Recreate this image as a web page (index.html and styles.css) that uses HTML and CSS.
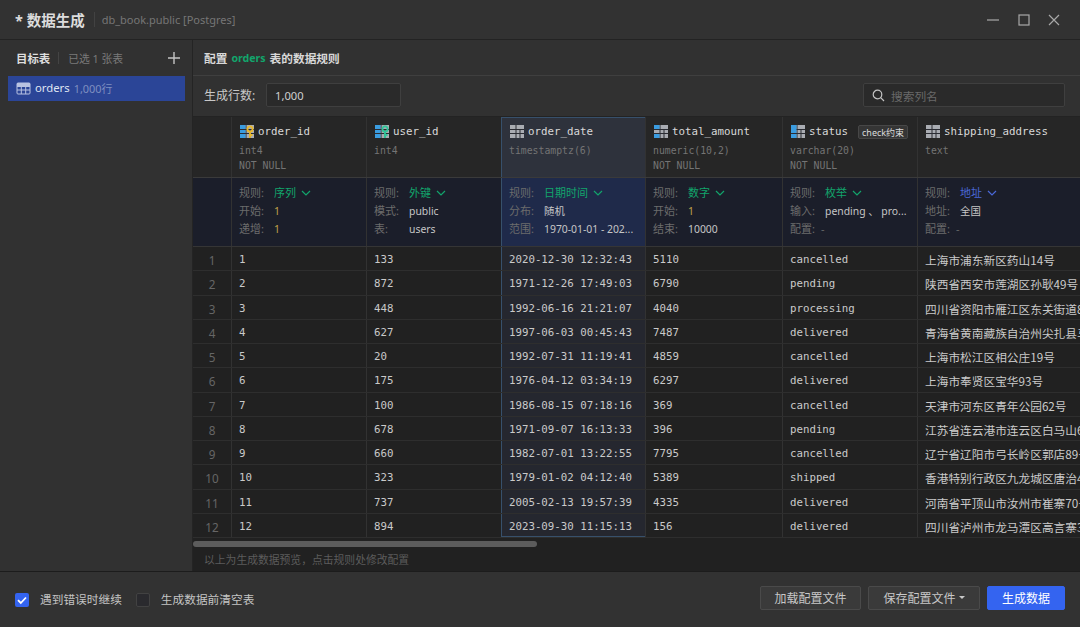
FILE: index.html
```html
<!DOCTYPE html>
<html lang="zh-CN">
<head>
<meta charset="utf-8">
<title>数据生成</title>
<link rel="stylesheet" href="styles.css">
</head>
<body>
<svg class="defs" width="0" height="0" aria-hidden="true">
  <symbol id="col-base" viewBox="0 0 14 13">
    <rect x="0" y="0" width="14" height="13" fill="#a9acb2"/>
    <path d="M6 0v13M6 4.5h8M6 8.5h8M10 4.5v8.5M0 4.5h6M0 8.5h6" stroke="#2a2c33" stroke-width="1" fill="none"/>
  </symbol>
</svg>
<div class="app">
  <header class="titlebar">
    <h1 class="title">* 数据生成</h1>
    <span class="title-sep"></span>
    <span class="conn">db_book.public [Postgres]</span>
    <div class="win-controls">
      <svg width="14" height="12" viewBox="0 0 14 12"><path d="M1 6h12" stroke="#a8a8a8" stroke-width="1.2"/></svg>
      <svg width="12" height="12" viewBox="0 0 12 12"><rect x="1" y="1" width="10" height="10" fill="none" stroke="#a8a8a8" stroke-width="1.2"/></svg>
      <svg width="12" height="12" viewBox="0 0 12 12"><path d="M1 1l10 10M11 1L1 11" stroke="#a8a8a8" stroke-width="1.2"/></svg>
    </div>
  </header>
  <div class="main">
    <aside class="sidebar">
      <div class="side-head">
        <strong class="side-title">目标表</strong>
        <span class="side-sep"></span>
        <span class="side-count">已选 1 张表</span>
        <svg class="side-add" width="14" height="14" viewBox="0 0 14 14"><path d="M7 1v12M1 7h12" stroke="#c4c4c4" stroke-width="1.4"/></svg>
      </div>
      <div class="side-item">
        <svg class="tbl-icon" width="15" height="13" viewBox="0 0 15 13"><rect x="1" y="1" width="13" height="11" rx="1" fill="none" stroke="#b9c3e2"/><path d="M1 4.5h13M1 8h13M5.3 4.5V12M9.7 4.5V12" stroke="#b9c3e2"/><rect x="1" y="1" width="13" height="3.5" fill="#b9c3e2"/></svg>
        <span class="side-name">orders</span>
        <span class="side-rows">1,000行</span>
      </div>
    </aside>
    <section class="content">
      <div class="config-head"><span>配置</span><span class="green">orders</span><span>表的数据规则</span></div>
      <div class="toolbar">
        <label class="rows-label">生成行数:</label>
        <div class="field rows-input">1,000</div>
        <div class="field search">
          <svg width="13" height="13" viewBox="0 0 13 13"><circle cx="5.5" cy="5.5" r="4.3" fill="none" stroke="#c4c4c4" stroke-width="1.2"/><path d="M8.7 8.7l3.3 3.3" stroke="#c4c4c4" stroke-width="1.2"/></svg>
          <span>搜索列名</span>
        </div>
      </div>
      <div class="grid">
        <div class="row head-row">
          <div class="cell corner"></div>
          <div class="cell">
            <div class="col-name"><svg class="col-icon" width="14" height="13"><use href="#col-base"/><rect width="5.5" height="4" fill="#3a9ce0"/><rect y="5" width="5.5" height="3" fill="#3a9ce0"/><rect y="9" width="5.5" height="4" fill="#3a9ce0"/><circle cx="10" cy="4" r="2.6" fill="none" stroke="#eab92a" stroke-width="1.8"/><path d="M10 6.5V13M10 10h2.5" stroke="#eab92a" stroke-width="1.8"/></svg>order_id</div>
            <div class="col-type">int4</div>
            <div class="col-type">NOT NULL</div>
          </div>
          <div class="cell">
            <div class="col-name"><svg class="col-icon" width="14" height="13"><use href="#col-base"/><rect width="5.5" height="4" fill="#3a9ce0"/><rect y="5" width="5.5" height="3" fill="#3a9ce0"/><rect y="9" width="5.5" height="4" fill="#3a9ce0"/><circle cx="10" cy="4" r="2.6" fill="none" stroke="#2fc79a" stroke-width="1.8"/><path d="M10 6.5V13M10 10h2.5" stroke="#2fc79a" stroke-width="1.8"/></svg>user_id</div>
            <div class="col-type">int4</div>
          </div>
          <div class="cell hl">
            <div class="col-name"><svg class="col-icon" width="14" height="13"><use href="#col-base"/></svg>order_date</div>
            <div class="col-type">timestamptz(6)</div>
          </div>
          <div class="cell">
            <div class="col-name"><svg class="col-icon" width="14" height="13"><use href="#col-base"/><rect width="5.5" height="4" fill="#3a9ce0"/><rect y="9" width="5.5" height="4" fill="#3a9ce0"/></svg>total_amount</div>
            <div class="col-type">numeric(10,2)</div>
            <div class="col-type">NOT NULL</div>
          </div>
          <div class="cell">
            <div class="col-name"><svg class="col-icon" width="14" height="13"><use href="#col-base"/><rect width="5.5" height="8" fill="#3a9ce0"/><rect y="9" width="5.5" height="4" fill="#3a9ce0"/></svg>status<span class="check-tag">check约束</span></div>
            <div class="col-type">varchar(20)</div>
            <div class="col-type">NOT NULL</div>
          </div>
          <div class="cell">
            <div class="col-name"><svg class="col-icon" width="14" height="13"><use href="#col-base"/></svg>shipping_address</div>
            <div class="col-type">text</div>
          </div>
        </div>
        <div class="row rule-row">
          <div class="cell corner"></div>
          <div class="cell">
            <div class="rule"><span class="k">规则:</span><span class="green">序列</span><svg class="chev" width="10" height="6" viewBox="0 0 10 6"><path d="M1 1l4 4 4-4" fill="none" stroke="#12a56c" stroke-width="1.2"/></svg></div>
            <div class="rule"><span class="k">开始:</span><span class="num">1</span></div>
            <div class="rule"><span class="k">递增:</span><span class="num">1</span></div>
          </div>
          <div class="cell">
            <div class="rule"><span class="k">规则:</span><span class="green">外键</span><svg class="chev" width="10" height="6" viewBox="0 0 10 6"><path d="M1 1l4 4 4-4" fill="none" stroke="#12a56c" stroke-width="1.2"/></svg></div>
            <div class="rule"><span class="k">模式:</span><span class="val">public</span></div>
            <div class="rule"><span class="k">表:</span><span class="val">users</span></div>
          </div>
          <div class="cell hl">
            <div class="rule"><span class="k">规则:</span><span class="green">日期时间</span><svg class="chev" width="10" height="6" viewBox="0 0 10 6"><path d="M1 1l4 4 4-4" fill="none" stroke="#12a56c" stroke-width="1.2"/></svg></div>
            <div class="rule"><span class="k">分布:</span><span class="val">随机</span></div>
            <div class="rule"><span class="k">范围:</span><span class="val">1970-01-01 - 202...</span></div>
          </div>
          <div class="cell">
            <div class="rule"><span class="k">规则:</span><span class="green">数字</span><svg class="chev" width="10" height="6" viewBox="0 0 10 6"><path d="M1 1l4 4 4-4" fill="none" stroke="#12a56c" stroke-width="1.2"/></svg></div>
            <div class="rule"><span class="k">开始:</span><span class="num">1</span></div>
            <div class="rule"><span class="k">结束:</span><span class="val">10000</span></div>
          </div>
          <div class="cell">
            <div class="rule"><span class="k">规则:</span><span class="green">枚举</span><svg class="chev" width="10" height="6" viewBox="0 0 10 6"><path d="M1 1l4 4 4-4" fill="none" stroke="#12a56c" stroke-width="1.2"/></svg></div>
            <div class="rule"><span class="k">输入:</span><span class="val">pending 、 pro...</span></div>
            <div class="rule"><span class="k">配置:</span><span class="dash">-</span></div>
          </div>
          <div class="cell">
            <div class="rule"><span class="k">规则:</span><span class="blue">地址</span><svg class="chev" width="10" height="6" viewBox="0 0 10 6"><path d="M1 1l4 4 4-4" fill="none" stroke="#4a68d8" stroke-width="1.2"/></svg></div>
            <div class="rule"><span class="k">地址:</span><span class="val">全国</span></div>
            <div class="rule"><span class="k">配置:</span><span class="dash">-</span></div>
          </div>
        </div>
        <div class="row data"><div class="cell idx">1</div><div class="cell">1</div><div class="cell">133</div><div class="cell hl">2020-12-30 12:32:43</div><div class="cell">5110</div><div class="cell">cancelled</div><div class="cell addr">上海市浦东新区药山14号</div></div>
        <div class="row data"><div class="cell idx">2</div><div class="cell">2</div><div class="cell">872</div><div class="cell hl">1971-12-26 17:49:03</div><div class="cell">6790</div><div class="cell">pending</div><div class="cell addr">陕西省西安市莲湖区孙耿49号</div></div>
        <div class="row data"><div class="cell idx">3</div><div class="cell">3</div><div class="cell">448</div><div class="cell hl">1992-06-16 21:21:07</div><div class="cell">4040</div><div class="cell">processing</div><div class="cell addr">四川省资阳市雁江区东关街道8号</div></div>
        <div class="row data"><div class="cell idx">4</div><div class="cell">4</div><div class="cell">627</div><div class="cell hl">1997-06-03 00:45:43</div><div class="cell">7487</div><div class="cell">delivered</div><div class="cell addr">青海省黄南藏族自治州尖扎县马</div></div>
        <div class="row data"><div class="cell idx">5</div><div class="cell">5</div><div class="cell">20</div><div class="cell hl">1992-07-31 11:19:41</div><div class="cell">4859</div><div class="cell">cancelled</div><div class="cell addr">上海市松江区相公庄19号</div></div>
        <div class="row data"><div class="cell idx">6</div><div class="cell">6</div><div class="cell">175</div><div class="cell hl">1976-04-12 03:34:19</div><div class="cell">6297</div><div class="cell">delivered</div><div class="cell addr">上海市奉贤区宝华93号</div></div>
        <div class="row data"><div class="cell idx">7</div><div class="cell">7</div><div class="cell">100</div><div class="cell hl">1986-08-15 07:18:16</div><div class="cell">369</div><div class="cell">cancelled</div><div class="cell addr">天津市河东区青年公园62号</div></div>
        <div class="row data"><div class="cell idx">8</div><div class="cell">8</div><div class="cell">678</div><div class="cell hl">1971-09-07 16:13:33</div><div class="cell">396</div><div class="cell">pending</div><div class="cell addr">江苏省连云港市连云区白马山6号</div></div>
        <div class="row data"><div class="cell idx">9</div><div class="cell">9</div><div class="cell">660</div><div class="cell hl">1982-07-01 13:22:55</div><div class="cell">7795</div><div class="cell">cancelled</div><div class="cell addr">辽宁省辽阳市弓长岭区郭店89号</div></div>
        <div class="row data"><div class="cell idx">10</div><div class="cell">10</div><div class="cell">323</div><div class="cell hl">1979-01-02 04:12:40</div><div class="cell">5389</div><div class="cell">shipped</div><div class="cell addr">香港特别行政区九龙城区唐治4号</div></div>
        <div class="row data"><div class="cell idx">11</div><div class="cell">11</div><div class="cell">737</div><div class="cell hl">2005-02-13 19:57:39</div><div class="cell">4335</div><div class="cell">delivered</div><div class="cell addr">河南省平顶山市汝州市崔寨70号</div></div>
        <div class="row data last"><div class="cell idx">12</div><div class="cell">12</div><div class="cell">894</div><div class="cell hl">2023-09-30 11:15:13</div><div class="cell">156</div><div class="cell">delivered</div><div class="cell addr">四川省泸州市龙马潭区高言寨3号</div></div>
        <div class="scrollbar"><div class="thumb"></div></div>
        <div class="note">以上为生成数据预览&#65292;点击规则处修改配置</div>
      </div>
    </section>
  </div>
  <footer class="footer">
    <span class="check on"><svg width="14" height="14" viewBox="0 0 14 14"><path d="M3 7.2l2.8 2.8L11 4.5" fill="none" stroke="#fff" stroke-width="1.8"/></svg></span>
    <span class="check-label first">遇到错误时继续</span>
    <span class="check"></span>
    <span class="check-label">生成数据前清空表</span>
    <div class="actions">
      <button class="btn load">加载配置文件</button>
      <button class="btn save">保存配置文件<span class="caret"></span></button>
      <button class="btn primary">生成数据</button>
    </div>
  </footer>
</div>
</body>
</html>
```
FILE: styles.css
```css
* { box-sizing: border-box; }
html, body { margin: 0; padding: 0; height: 100%; overflow: hidden; }
body {
  background: #313131;
  color: #c8c8c8;
  font-family: "Noto Sans", "Noto Sans CJK SC", sans-serif;
  font-size: 11.7px;
}
.defs { position: absolute; }
.app { width: 1080px; height: 627px; display: flex; flex-direction: column; overflow: hidden; }

.titlebar {
  height: 40px; flex: none; display: flex; align-items: center;
  padding-left: 15px; border-bottom: 1px solid #232323; background: #323232;
}
.title { margin: 0; font-size: 14.5px; font-weight: 700; color: #dcdcdc; line-height: 20px; }
.title-sep { width: 1px; height: 15px; background: #424242; margin: 0 7px 0 9px; }
.conn { color: #767676; font-size: 11px; }
.win-controls { margin-left: auto; margin-top: 1px; display: flex; align-items: center; gap: 18px; padding-right: 20px; }

.main { flex: 1; display: flex; min-height: 0; }
.sidebar { width: 193px; flex: none; border-right: 1px solid #242424; background: #313131; padding: 0 7px 0 8px; }
.side-head { height: 36px; display: flex; align-items: center; padding-left: 8px; }
.side-title { color: #dedede; font-size: 11.4px; font-weight: 700; }
.side-sep { width: 1px; height: 12px; background: #444; margin: 0 9px 0 8px; }
.side-count { color: #7a7a7a; font-size: 10.8px; }
.side-add { margin-left: auto; margin-right: 4px; }
.side-item { height: 25px; background: #2b4597; display: flex; align-items: center; padding: 0 0 2px 8px; color: #dfe4f2; font-size: 11.3px; }
.tbl-icon { margin-right: 4px; margin-top: 2px; }
.side-rows { margin-left: 4px; color: #7f8fc0; font-size: 10.9px; }

.content { flex: 1; min-width: 0; display: flex; flex-direction: column; }
.config-head {
  height: 36px; flex: none; display: flex; align-items: center; gap: 4px;
  padding-left: 11px; font-weight: 700; font-size: 11.7px; color: #d8d8d8;
  border-bottom: 1px solid #3f3f3f;
}
.config-head .green { font-size: 10.6px; }
.green { color: #12a56c; }
.blue { color: #4a68d8; }
.toolbar { height: 41px; flex: none; display: flex; align-items: center; padding: 0 15px 2px 11px; border-bottom: 1px solid #232323; }
.rows-label { color: #c8c8c8; font-size: 12px; width: 62px; }
.field { height: 24px; background: #2a2a2a; border: 1px solid #3f3f3f; border-radius: 2px; display: flex; align-items: center; }
.rows-input { width: 135px; padding-left: 8px; color: #d0d0d0; font-size: 11.2px; }
.search { width: 202px; margin-left: auto; padding-left: 8px; gap: 6px; color: #696969; }

.grid { flex: 1; min-height: 0; background: #212121; overflow: hidden; }
.row { display: grid; grid-template-columns: 38px 135px 135px 144px 137px 135px 163px; width: 887px; }
.cell { border-left: 1px solid #323232; padding-left: 7px; white-space: nowrap; overflow: hidden; }
.cell:first-child { border-left: 0; padding-left: 0; }
.cell.hl { border-left: 1px solid #37506b; border-right: 1px solid #37506b; margin-right: -1px; background: #25272f; }

.head-row { height: 61px; background: #262626; border-bottom: 1px solid #3a3a3a; }
.head-row .cell { padding-top: 7px; }
.head-row .cell.hl { background: #2e323c; border-top: 1px solid #37506b; padding-top: 6px; }
.col-name { display: flex; align-items: center; height: 15px; font-family: "DejaVu Sans Mono", monospace; font-size: 10.8px; color: #d8d8d8; }
.col-icon { margin: 0 4px 0 1px; flex: none; }
.col-name + .col-type { margin-top: 4px; }
.col-type { height: 15px; line-height: 15px; font-family: "DejaVu Sans Mono", monospace; font-size: 9.8px; color: #747474; }
.check-tag {
  margin-left: 10px; height: 14px; line-height: 13px; padding: 0 3px; background: #353535;
  border: 1px solid #474747; border-radius: 2px; font-size: 9px; color: #dcdcdc;
  font-family: "Noto Sans", "Noto Sans CJK SC", sans-serif;
}

.rule-row { height: 69px; background: #1b1e2a; border-bottom: 1px solid #353535; font-size: 11px; }
.rule-row .cell { padding-top: 6px; }
.rule-row .cell.hl { background: #1f2a4a; }
.rule { height: 18px; line-height: 18px; display: flex; align-items: center; }
.k { width: 35px; flex: none; color: #6c6c6c; }
.num { color: #c2a24a; font-size: 10.4px; }
.val { color: #c6c6c6; font-size: 10.4px; }
.dash { color: #666; margin-left: -4px; }
.chev { margin-left: 5px; }

.data { height: 24.27px; border-bottom: 1px solid #2e2e2e; }
.data .cell { line-height: 25px; font-family: "DejaVu Sans Mono", monospace; font-size: 10.75px; color: #cacaca; }
.data .cell.idx { text-align: center; color: #666; font-family: "Noto Sans", sans-serif; font-size: 11.7px; line-height: 26px; }
.data .cell.addr { font-family: "Noto Sans CJK SC", sans-serif; font-size: 11.7px; }
.data.last .cell.hl { border-bottom: 1px solid #37506b; }

.scrollbar { height: 10px; padding-top: 3px; }
.thumb { width: 344px; height: 6px; border-radius: 3px; background: #5c5c5c; }
.note { height: 22px; line-height: 23px; padding-left: 11px; font-size: 10.8px; color: #5c5c5c; }

.footer { height: 56px; flex: none; display: flex; align-items: center; padding: 0 15px; border-top: 1px solid #1c1c1c; background: #323232; }
.check { width: 14px; height: 14px; border-radius: 2px; background: #2a2a2e; border: 1px solid #424242; flex: none; display: flex; }
.check.on { background: #3464f0; border: 0; }
.check-label { margin: 0 9px 2px 11px; color: #c4c4c4; font-size: 11.7px; }
.check-label.first { margin-right: 14px; }
.actions { margin-left: auto; margin-bottom: 4px; display: flex; gap: 7px; }
.btn { height: 24px; border-radius: 2px; border: 1px solid #4a4a4a; background: #3a3a3a; color: #c8c8c8; font: 12px "Noto Sans", "Noto Sans CJK SC", sans-serif; padding: 0; display: flex; align-items: center; justify-content: center; }
.load { width: 101px; }
.save { width: 112px; }
.primary { width: 78px; background: #3464f0; border-color: #3464f0; color: #fff; }
.caret { width: 0; height: 0; margin-left: 3px; border: 3px solid transparent; border-top-color: #c8c8c8; border-bottom: 0; }
```
